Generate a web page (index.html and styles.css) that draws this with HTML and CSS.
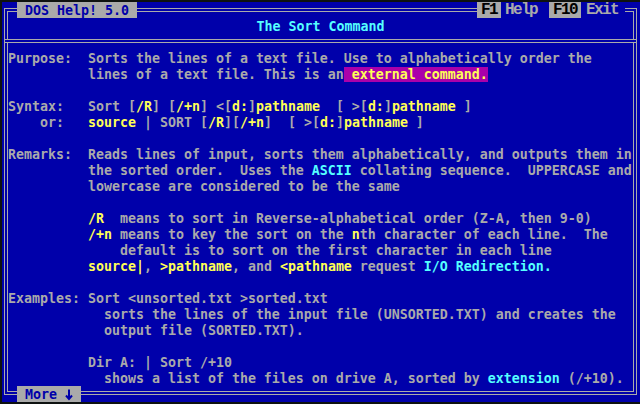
FILE: index.html
```html
<!DOCTYPE html>
<html>
<head>
<meta charset="utf-8">
<link rel="stylesheet" href="styles.css">
</head>
<body>
<div class="screen">
  <div class="frame">
    <div class="inner">
      <div class="title">The Sort Command</div>
      <div class="sep"></div>
<pre class="body">Purpose:  Sorts the lines of a text file. Use to alphabetically order the
          lines of a text file. This is an<span class="hl"> external command.</span>

Syntax:   Sort [<span class="y">/R</span>] [<span class="y">/+n</span>] &lt;[<span class="y">d:</span>]<span class="y">pathname</span>  [ &gt;[<span class="y">d:</span>]<span class="y">pathname</span> ]
    or:   <span class="y">source</span> | SORT [<span class="y">/R</span>][<span class="y">/+n</span>]  [ &gt;[<span class="y">d:</span>]<span class="y">pathname</span> ]

Remarks:  Reads lines of input, sorts them alphabetically, and outputs them in
          the sorted order.  Uses the <span class="c">ASCII</span> collating sequence.  UPPERCASE and
          lowercase are considered to be the same

          <span class="y">/R</span>  means to sort in Reverse-alphabetical order (Z-A, then 9-0)
          <span class="y">/+n</span> means to key the sort on the <span class="y">n</span>th character of each line.  The
              default is to sort on the first character in each line
          <span class="y">source|</span>, <span class="y">&gt;pathname</span>, and <span class="y">&lt;pathname</span> request <span class="c">I/O Redirection.</span>

Examples: Sort &lt;unsorted.txt &gt;sorted.txt
            sorts the lines of the input file (UNSORTED.TXT) and creates the
            output file (SORTED.TXT).

          Dir A: | Sort /+10
            shows a list of the files on drive A, sorted by <span class="c">extension</span> (/+10).</pre>
    </div>
    <div class="topbar">
      <span class="apptag">DOS Help! 5.0</span>
      <span class="fill"></span>
      <span class="key k1">F1</span><span class="label l-help">Help</span><span class="key k10">F10</span><span class="label l-exit">Exit</span>
    </div>
    <div class="more">More <svg class="arrow" width="8" height="16" viewBox="0 0 8 16"><path d="M4 3.5V13M1 9.5L4 13L7 9.5" fill="none" stroke="#0000aa" stroke-width="2"/></svg></div>
  </div>
</div>
</body>
</html>
```
FILE: styles.css
```css
html, body {
  margin: 0;
  padding: 0;
  background: #0e1210;
}
body {
  width: 640px;
  height: 404px;
  overflow: hidden;
}
.screen {
  margin: 2px 0 0 2px;
  width: 638px;
  height: 400px;
  background: #0000aa;
  padding: 6px 0 0 2px;
  box-sizing: border-box;
  font-family: "DejaVu Sans Mono", monospace;
  font-size: 13.29px;
  font-weight: bold;
  color: #aaaaaa;
}
.frame {
  position: relative;
  width: 633px;
  height: 387px;
  border: 1px solid #aaaaaa;
  padding: 2px;
  box-sizing: border-box;
}
.inner {
  height: 100%;
  border: 1px solid #aaaaaa;
  box-sizing: border-box;
  padding-top: 7px;
}
.title {
  height: 16px;
  line-height: 16px;
  color: #55ffff;
  text-align: center;
}
.sep {
  margin: 4px -3px 8px;
  height: 4px;
  border-top: 1px solid #aaaaaa;
  border-bottom: 1px solid #aaaaaa;
  background: #0000aa;
  box-sizing: border-box;
}
.body {
  margin: 0;
  font: inherit;
  line-height: 16px;
  white-space: pre;
  color: #aaaaaa;
}
.y { color: #ffff55; }
.c { color: #55ffff; }
.hl { background: #aa00aa; color: #ffff55; }

.topbar {
  position: absolute;
  top: -7px;
  left: 12px;
  right: 11px;
  height: 16px;
  display: flex;
  line-height: 17px;
}
.apptag {
  background: #aaaaaa;
  color: #0000aa;
  padding: 0 8px;
}
.fill { flex: 1; }
.key, .label {
  font-family: "Liberation Mono", monospace;
  font-size: 16px;
  letter-spacing: -1.6px;
  white-space: nowrap;
}
.key {
  background: #aaaaaa;
  color: #000000;
  padding-left: 4px;
  box-sizing: border-box;
}
.k1 { width: 24px; }
.k10 { width: 32px; }
.label {
  background: #0000aa;
  color: #aaaaaa;
}
.l-help { width: 48px; padding-left: 4px; box-sizing: border-box; }
.l-exit { width: 44px; padding-left: 5px; box-sizing: border-box; }

.more {
  position: absolute;
  left: 12px;
  bottom: -8px;
  height: 16px;
  line-height: 17px;
  background: #aaaaaa;
  color: #0000aa;
  padding: 0 8px;
  display: flex;
  align-items: flex-start;
}
.arrow {
  display: block;
  margin-left: 8px;
}
```
